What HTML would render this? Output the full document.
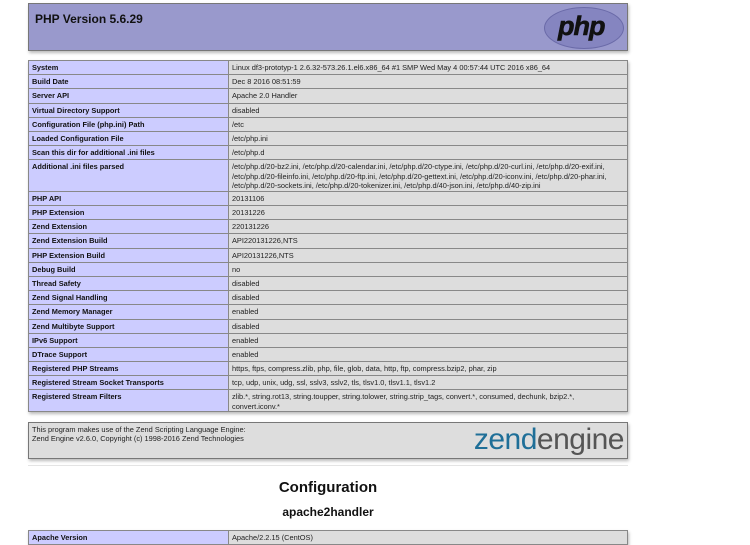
<!DOCTYPE html>
<html><head><style>
body{margin:0;background:#fff;font-family:"Liberation Sans",Arial,sans-serif;width:750px;height:543px;overflow:hidden;position:relative}
.hd{position:absolute;left:28px;top:3px;width:598px;height:46px;background:#9999cc;border:1px solid #777;box-shadow:1px 2px 3px #bbb}
.hd h1{margin:0;position:absolute;left:6px;top:8px;font-size:12px;font-weight:bold;color:#111}
.logo{position:absolute;right:3px;top:3px;width:78px;height:40px;border-radius:50%;background:#8585c0;border:1px solid #6a6aa8}
.logo span{position:absolute;left:13px;top:3px;font-size:27px;font-style:italic;font-weight:bold;color:#111;-webkit-text-stroke:0.6px #111;letter-spacing:-1px;line-height:normal}
table{position:absolute;left:28px;border-collapse:collapse;width:600px;table-layout:fixed;box-shadow:1px 2px 3px #bbb}
td{border:1px solid #888;font-size:7.4px;line-height:9.5px;padding:2px 3px 0 3px;vertical-align:top;color:#222;overflow:hidden}
td.e{background:#ccccff;width:193px;font-weight:bold;color:#111}
td.v{background:#dddddd}
.z{position:absolute;left:28px;top:422px;width:598px;height:35px;background:#dddddd;border:1px solid #777;box-shadow:1px 2px 3px #bbb;font-size:7.4px;line-height:8.5px;color:#222}
.z p{margin:0;position:absolute;left:3px;top:3px}
.zl{position:absolute;right:3px;top:1px;font-size:30px;line-height:32px;color:#555;letter-spacing:-0.5px}
.zl b{color:#1f6f98;font-weight:normal}
hr{position:absolute;left:28px;top:465px;width:600px;margin:0;border:0;border-top:1px solid #e4e4e4}
h2{position:absolute;left:0;width:656px;text-align:center;margin:0;font-size:15px;top:479px;color:#111}
h3{position:absolute;left:0;width:656px;text-align:center;margin:0;font-size:12px;top:505px;color:#111}
</style></head><body>
<div class="hd"><h1>PHP Version 5.6.29</h1><div class="logo"><span>php</span></div></div>
<table style="top:60px">
<tr style="height:14.2px"><td class="e">System</td><td class="v">Linux df3-prototyp-1 2.6.32-573.26.1.el6.x86_64 #1 SMP Wed May 4 00:57:44 UTC 2016 x86_64</td></tr>
<tr style="height:14.2px"><td class="e">Build Date</td><td class="v">Dec 8 2016 08:51:59</td></tr>
<tr style="height:14.2px"><td class="e">Server API</td><td class="v">Apache 2.0 Handler</td></tr>
<tr style="height:14.2px"><td class="e">Virtual Directory Support</td><td class="v">disabled</td></tr>
<tr style="height:14.2px"><td class="e">Configuration File (php.ini) Path</td><td class="v">/etc</td></tr>
<tr style="height:14.2px"><td class="e">Loaded Configuration File</td><td class="v">/etc/php.ini</td></tr>
<tr style="height:14.2px"><td class="e">Scan this dir for additional .ini files</td><td class="v">/etc/php.d</td></tr>
<tr style="height:31px"><td class="e">Additional .ini files parsed</td><td class="v">/etc/php.d/20-bz2.ini, /etc/php.d/20-calendar.ini, /etc/php.d/20-ctype.ini, /etc/php.d/20-curl.ini, /etc/php.d/20-exif.ini, /etc/php.d/20-fileinfo.ini, /etc/php.d/20-ftp.ini, /etc/php.d/20-gettext.ini, /etc/php.d/20-iconv.ini, /etc/php.d/20-phar.ini, /etc/php.d/20-sockets.ini, /etc/php.d/20-tokenizer.ini, /etc/php.d/40-json.ini, /etc/php.d/40-zip.ini</td></tr>
<tr style="height:14.2px"><td class="e">PHP API</td><td class="v">20131106</td></tr>
<tr style="height:14.2px"><td class="e">PHP Extension</td><td class="v">20131226</td></tr>
<tr style="height:14.2px"><td class="e">Zend Extension</td><td class="v">220131226</td></tr>
<tr style="height:14.2px"><td class="e">Zend Extension Build</td><td class="v">API220131226,NTS</td></tr>
<tr style="height:14.2px"><td class="e">PHP Extension Build</td><td class="v">API20131226,NTS</td></tr>
<tr style="height:14.2px"><td class="e">Debug Build</td><td class="v">no</td></tr>
<tr style="height:14.2px"><td class="e">Thread Safety</td><td class="v">disabled</td></tr>
<tr style="height:14.2px"><td class="e">Zend Signal Handling</td><td class="v">disabled</td></tr>
<tr style="height:14.2px"><td class="e">Zend Memory Manager</td><td class="v">enabled</td></tr>
<tr style="height:14.2px"><td class="e">Zend Multibyte Support</td><td class="v">disabled</td></tr>
<tr style="height:14.2px"><td class="e">IPv6 Support</td><td class="v">enabled</td></tr>
<tr style="height:14.2px"><td class="e">DTrace Support</td><td class="v">enabled</td></tr>
<tr style="height:14.2px"><td class="e">Registered PHP Streams</td><td class="v">https, ftps, compress.zlib, php, file, glob, data, http, ftp, compress.bzip2, phar, zip</td></tr>
<tr style="height:14.2px"><td class="e">Registered Stream Socket Transports</td><td class="v">tcp, udp, unix, udg, ssl, sslv3, sslv2, tls, tlsv1.0, tlsv1.1, tlsv1.2</td></tr>
<tr style="height:22px"><td class="e">Registered Stream Filters</td><td class="v">zlib.*, string.rot13, string.toupper, string.tolower, string.strip_tags, convert.*, consumed, dechunk, bzip2.*, convert.iconv.*</td></tr>
</table>
<div class="z"><p>This program makes use of the Zend Scripting Language Engine:<br>Zend Engine v2.6.0, Copyright (c) 1998-2016 Zend Technologies</p><div class="zl"><b>zend</b>engine</div></div>
<hr>
<h2>Configuration</h2>
<h3>apache2handler</h3>
<table style="top:530px">
<tr style="height:14.2px"><td class="e">Apache Version</td><td class="v">Apache/2.2.15 (CentOS)</td></tr>
</table>
</body></html>
